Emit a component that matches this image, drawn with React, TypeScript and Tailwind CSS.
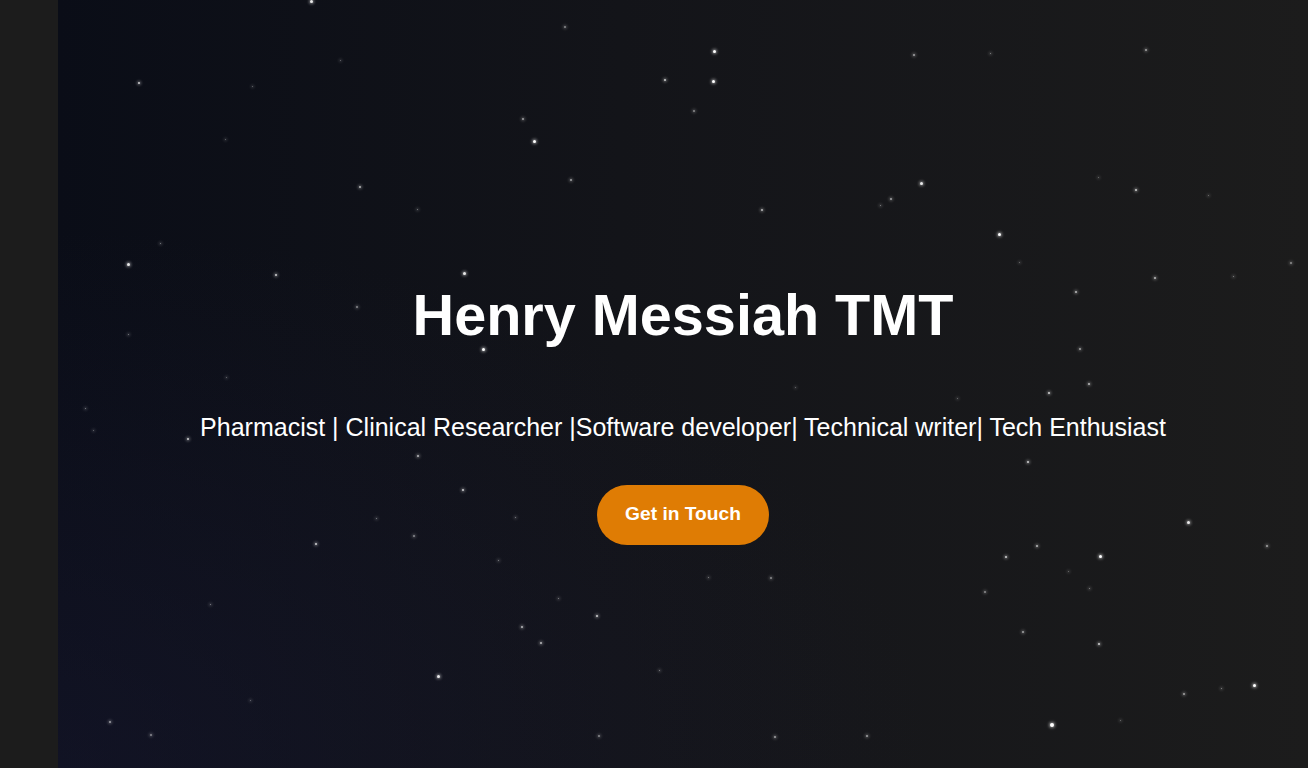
import React from "react";

type Star = [number, number, number, number];

// [x, y, size, opacity] in page coordinates
const stars: Star[] = [
  [311, 1, 3, 0.9], [714, 51, 3, 1], [665, 80, 2, 0.8], [713, 81, 3, 1], [139, 83, 2, 0.8],
  [534, 141, 3, 1], [360, 187, 2, 0.7], [921, 183, 3, 0.9], [1136, 190, 2, 0.8], [999, 234, 3, 1],
  [762, 210, 2, 0.7], [128, 264, 3, 0.9], [276, 275, 2, 0.8], [464, 273, 3, 0.9], [1155, 278, 2, 0.7],
  [1076, 292, 2, 0.7], [483, 349, 3, 1], [1080, 349, 2, 0.6], [1049, 393, 2, 0.8], [1089, 384, 2, 0.7],
  [188, 439, 2, 0.8], [418, 456, 2, 0.7], [1028, 462, 2, 0.8], [463, 490, 2, 0.8], [1188, 522, 3, 0.9],
  [316, 544, 2, 0.8], [1037, 546, 2, 0.7], [1100, 556, 3, 1], [1006, 557, 2, 0.8], [1267, 546, 2, 0.6],
  [597, 616, 2, 0.8], [522, 627, 2, 0.7], [541, 643, 2, 0.7], [1099, 644, 2, 0.8], [1023, 632, 2, 0.6],
  [438, 676, 3, 0.9], [1254, 685, 3, 1], [1184, 694, 2, 0.6], [1052, 725, 4, 1], [110, 722, 2, 0.6],
  [151, 735, 2, 0.5], [775, 737, 2, 0.6], [867, 736, 2, 0.6], [599, 736, 2, 0.5], [914, 55, 2, 0.6],
  [1146, 50, 2, 0.6], [565, 27, 2, 0.5], [990, 53, 1, 0.5], [694, 111, 2, 0.5], [523, 119, 2, 0.6],
  [571, 180, 2, 0.6], [880, 205, 1, 0.5], [891, 199, 2, 0.6], [1291, 263, 2, 0.5], [1233, 276, 1, 0.5],
  [357, 307, 2, 0.5], [128, 334, 1, 0.5], [85, 408, 1, 0.5], [957, 398, 1, 0.4], [376, 518, 1, 0.5],
  [414, 536, 2, 0.5], [515, 517, 1, 0.5], [498, 560, 1, 0.5], [985, 592, 2, 0.5], [1089, 588, 1, 0.5],
  [771, 578, 2, 0.5], [708, 577, 1, 0.5], [659, 670, 1, 0.5], [558, 598, 1, 0.5], [210, 604, 1, 0.5],
  [1221, 688, 1, 0.5], [252, 86, 1, 0.4], [160, 243, 1, 0.5], [225, 139, 1, 0.4], [1208, 195, 1, 0.4],
  [1098, 177, 1, 0.4], [417, 209, 1, 0.5], [226, 377, 1, 0.4], [1068, 571, 1, 0.4], [1120, 720, 1, 0.4],
  [795, 387, 1, 0.4], [1019, 262, 1, 0.4], [93, 430, 1, 0.4], [250, 700, 1, 0.4], [340, 60, 1, 0.4],
];

export default function App() {
  return (
    <div
      className="flex h-[768px] w-full overflow-hidden bg-[#1c1c1c]"
      style={{ fontFamily: '"Liberation Sans", Arial, sans-serif' }}
    >
      <aside className="w-[58px] shrink-0 bg-[#1c1c1c]" />
      <main className="relative flex flex-1 flex-col items-center overflow-hidden bg-[linear-gradient(to_right,#0a0d17_0%,#131419_45%,#1c1c1c_100%)] pt-[287px]">
        <div className="pointer-events-none absolute inset-0 bg-[radial-gradient(ellipse_70%_70%_at_0%_100%,rgba(26,26,52,0.45),rgba(26,26,52,0)_100%)]" />
        <div className="pointer-events-none absolute inset-0">
          {stars.map(([x, y, s, o], i) => (
            <span
              key={i}
              className="absolute rounded-full bg-white shadow-[0_0_3px_1px_rgba(255,255,255,0.5)]"
              style={{
                left: x - 58 - s / 2,
                top: y - s / 2,
                width: s,
                height: s,
                opacity: o,
              }}
            />
          ))}
        </div>
        <h1 className="relative text-[57.6px] font-bold leading-none text-white">
          Henry Messiah TMT
        </h1>
        <p className="relative mt-[70px] whitespace-nowrap text-[25px] leading-none text-white">
          Pharmacist | Clinical Researcher |Software developer| Technical writer| Tech Enthusiast
        </p>
        <button className="relative mt-[45px] flex h-[60px] items-center justify-center rounded-full bg-[#df7c04] px-[28px] text-[19.2px] font-bold text-white">
          Get in Touch
        </button>
      </main>
    </div>
  );
}
